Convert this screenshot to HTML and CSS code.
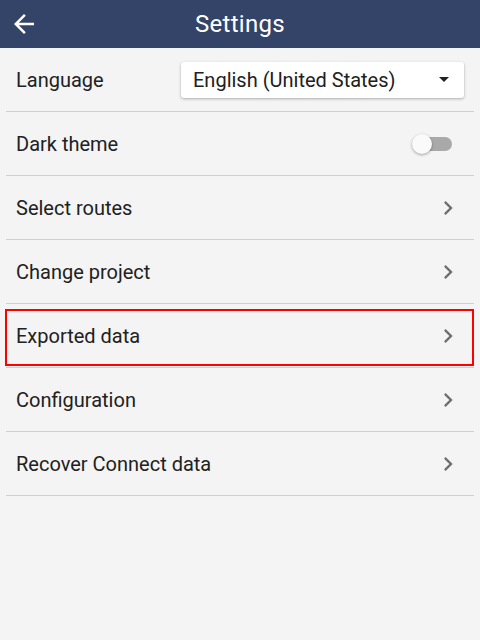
FILE: index.html
```html
<!DOCTYPE html>
<html>
<head>
<meta charset="utf-8">
<link rel="stylesheet" href="styles.css">
</head>
<body>
<header class="bar">
  <svg class="back" viewBox="0 0 24 24" width="30" height="30"><path d="M20 11H7.83l5.59-5.59L12 4l-8 8 8 8 1.41-1.41L7.83 13H20v-2z" fill="#fff"/></svg>
  <h1 class="title">Settings</h1>
</header>
<main class="list">
  <div class="row">
    <span class="label">Language</span>
    <div class="select"><span>English (United States)</span><span class="caret"></span></div>
  </div>
  <div class="row">
    <span class="label">Dark theme</span>
    <div class="toggle"><span class="track"></span><span class="knob"></span></div>
  </div>
  <div class="row"><span class="label">Select routes</span><svg class="chev" viewBox="0 0 24 24" width="28" height="28"><path d="M10 6 8.59 7.41 13.17 12l-4.58 4.59L10 18l6-6z"/></svg></div>
  <div class="row"><span class="label">Change project</span><svg class="chev" viewBox="0 0 24 24" width="28" height="28"><path d="M10 6 8.59 7.41 13.17 12l-4.58 4.59L10 18l6-6z"/></svg></div>
  <div class="row highlight"><span class="label">Exported data</span><svg class="chev" viewBox="0 0 24 24" width="28" height="28"><path d="M10 6 8.59 7.41 13.17 12l-4.58 4.59L10 18l6-6z"/></svg></div>
  <div class="row"><span class="label">Configuration</span><svg class="chev" viewBox="0 0 24 24" width="28" height="28"><path d="M10 6 8.59 7.41 13.17 12l-4.58 4.59L10 18l6-6z"/></svg></div>
  <div class="row"><span class="label">Recover Connect data</span><svg class="chev" viewBox="0 0 24 24" width="28" height="28"><path d="M10 6 8.59 7.41 13.17 12l-4.58 4.59L10 18l6-6z"/></svg></div>
</main>
</body>
</html>
```
FILE: styles.css
```css
html, body { margin: 0; padding: 0; }
body {
  width: 480px; height: 640px;
  background: #f4f4f4;
  font-family: Roboto, "Liberation Sans", sans-serif;
  color: #212121;
}
.bar {
  height: 48px;
  background: #344468;
  display: flex;
  align-items: center;
  justify-content: center;
  position: relative;
}
.back { position: absolute; left: 9px; top: 9px; }
.title {
  margin: 0;
  font-size: 24px;
  font-weight: 400;
  color: #fff;
  letter-spacing: 0.3px;
}
.list { padding: 0 6px; }
.row {
  height: 63px;
  border-bottom: 1px solid #cfcfcf;
  display: flex;
  align-items: center;
  justify-content: space-between;
  padding: 0 10px;
  position: relative;
}
.label { font-size: 20px; }
.highlight::after {
  content: "";
  position: absolute;
  left: -1px; right: 0; top: 5px; bottom: 1px;
  border: 2px solid #f00;
}
.select {
  width: 283px; height: 36px;
  background: #fff;
  border-radius: 3px;
  box-shadow: 0 1px 3px rgba(0,0,0,0.3);
  display: flex; align-items: center; justify-content: space-between;
  padding: 0 15px 0 12px;
  box-sizing: border-box;
  font-size: 20px;
}
.caret {
  width: 0; height: 0;
  border-left: 5px solid transparent;
  border-right: 5px solid transparent;
  border-top: 5px solid #212121;
}
.toggle { width: 40px; height: 20px; position: relative; margin-right: 12px; }
.track {
  position: absolute; left: 6px; top: 3px;
  width: 34px; height: 14px; border-radius: 7px;
  background: #a9a9a9;
}
.knob {
  position: absolute; left: 0; top: 0;
  width: 20px; height: 20px; border-radius: 50%;
  background: #fafafa;
  box-shadow: 0 1px 3px rgba(0,0,0,0.35);
}
.chev { fill: #6f6f6f; margin-right: 2px; }
```
